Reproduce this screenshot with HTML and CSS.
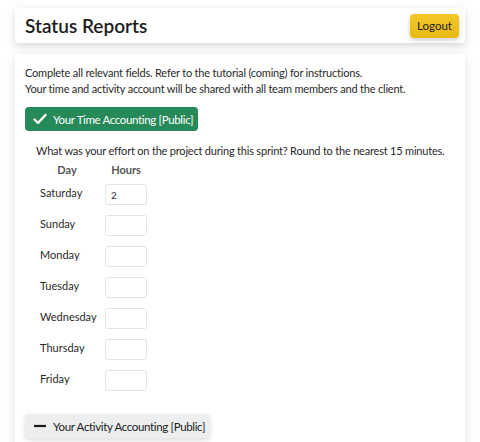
FILE: index.html
```html
<!DOCTYPE html>
<html>
<head>
<meta charset="utf-8">
<link rel="stylesheet" href="styles.css">
</head>
<body>
<header class="topbar">
  <h1 class="title">Status Reports</h1>
  <button class="btn-logout">Logout</button>
</header>
<main class="card">
  <p class="intro">Complete all relevant fields. Refer to the tutorial (coming) for instructions.<br>Your time and activity account will be shared with all team members and the client.</p>
  <div class="btn-row">
    <button class="btn-section btn-green">
      <svg class="icon" viewBox="0 0 16 16" width="16" height="16"><path d="M2.5 8.5 L6 12 L13.5 4" fill="none" stroke="#fff" stroke-width="2.4" stroke-linecap="round" stroke-linejoin="round"/></svg>
      <span>Your Time Accounting [Public]</span>
    </button>
  </div>
  <section class="time">
    <p class="question">What was your effort on the project during this sprint? Round to the nearest 15 minutes.</p>
    <div class="grid">
      <div class="head head-day">Day</div><div class="head head-hours">Hours</div>
      <div class="day">Saturday</div><div><input class="hours" type="text" value="2"></div>
      <div class="day">Sunday</div><div><input class="hours" type="text"></div>
      <div class="day">Monday</div><div><input class="hours" type="text"></div>
      <div class="day">Tuesday</div><div><input class="hours" type="text"></div>
      <div class="day">Wednesday</div><div><input class="hours" type="text"></div>
      <div class="day">Thursday</div><div><input class="hours" type="text"></div>
      <div class="day">Friday</div><div><input class="hours" type="text"></div>
    </div>
  </section>
  <div class="btn-row btn-row-gray">
    <button class="btn-section btn-gray">
      <svg class="icon" viewBox="0 0 16 16" width="16" height="16"><path d="M2 8 H14" stroke="#1a1a1a" stroke-width="2.2"/></svg>
      <span>Your Activity Accounting [Public]</span>
    </button>
  </div>
</main>
</body>
</html>
```
FILE: styles.css
```css
* { box-sizing: border-box; }
html, body { margin: 0; padding: 0; background: #fff; }
body {
  font-family: "Lato", "DejaVu Sans", sans-serif;
  color: #212529;
  padding: 8px 15px 0 15px;
  overflow: hidden;
  height: 442px;
}
.topbar {
  display: flex;
  align-items: center;
  justify-content: space-between;
  height: 35px;
  padding: 0 6px 0 10px;
  background: #fff;
  border-radius: 3px;
  box-shadow: 0 3px 8px rgba(0,0,0,0.16);
}
.title {
  margin: 0;
  font-size: 19px;
  font-weight: 600;
  color: #1c1c1c;
}
.btn-logout {
  font-family: inherit;
  font-size: 11.5px;
  color: #222;
  background: linear-gradient(#f3c82a, #e9b810);
  border: none;
  border-radius: 4px;
  height: 24px;
  width: 49px;
  padding: 0;
  box-shadow: 0 2px 5px rgba(0,0,0,0.2);
}
.card {
  margin-top: 11px;
  background: #fff;
  border-radius: 3px;
  box-shadow: 0 2px 10px rgba(0,0,0,0.12);
  padding: 11px 10px 20px 10px;
  min-height: 420px;
}
.intro {
  margin: 0;
  font-size: 11px;
  letter-spacing: -0.2px;
  line-height: 16px;
  color: #2a2a2a;
  white-space: nowrap;
}
.btn-row { display: flex; margin-top: 10px; }
.btn-row-gray { margin-top: 18px; }
.btn-section {
  display: flex;
  align-items: center;
  gap: 5px;
  font-family: inherit;
  font-size: 11.5px;
  letter-spacing: -0.35px;
  border: none;
  border-radius: 4px;
  height: 24px;
  padding: 0 5px 0 7px;
  white-space: nowrap;
}
.btn-green {
  background: #258a57;
  color: #fff;
}
.btn-gray {
  background: #eceeef;
  color: #222;
  box-shadow: 0 2px 5px rgba(0,0,0,0.15);
}
.time { padding: 0 0 0 11px; }
.question {
  margin: 12px 0 0 0;
  font-size: 11px;
  letter-spacing: -0.2px;
  line-height: 16px;
  color: #2a2a2a;
  white-space: nowrap;
}
.grid {
  display: grid;
  grid-template-columns: 65px 50px;
  margin: 4px 0 0 4px;
  align-items: center;
}
.head {
  font-size: 11px;
  font-weight: 700;
  color: #555;
  text-align: center;
  height: 16px;
}
.head-day { padding-right: 11px; }
.head-hours { padding-right: 8px; }
.day {
  font-size: 11px;
  color: #2a2a2a;
  height: 31px;
  line-height: 31px;
  margin-top: -5px;
}
.hours {
  width: 42px;
  height: 21px;
  border: 1px solid #e2e4e6;
  border-radius: 3px;
  font-family: inherit;
  font-size: 10px;
  padding: 0 5px;
  margin: 5px 0;
  color: #333;
  display: block;
}
```
